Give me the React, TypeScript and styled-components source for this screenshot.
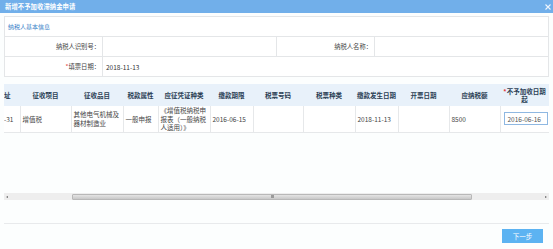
import React from 'react'
import styled, { createGlobalStyle } from 'styled-components'

const GlobalStyle = createGlobalStyle`
  html, body {
    margin: 0;
    padding: 0;
    background: #fcfefe;
  }
  body {
    font-family: "Noto Sans CJK SC", "Noto Sans", sans-serif;
    color: #333;
  }
`

const Window = styled.div`
  width: 553px;
  height: 249px;
  display: flex;
  flex-direction: column;
  background: #fcfefe;
  overflow: hidden;
`

const TitleBar = styled.div`
  height: 13px;
  flex: none;
  background: #71afea;
  display: flex;
  align-items: center;
  justify-content: space-between;
  padding: 0 2px 0 5px;
  color: #fff;
  font-size: 6.3px;
  font-weight: bold;
  letter-spacing: 0.1px;
`

const Body = styled.div`
  flex: 1;
  display: flex;
  flex-direction: column;
  padding: 3px 4px 0 4px;
`

const Panel = styled.div`
  border: 1px solid #e4e6e8;
  background: #fff;
`

const SectionTitle = styled.div`
  height: 19px;
  display: flex;
  align-items: center;
  padding-left: 3px;
  font-size: 6px;
  color: #3a82c8;
  border-bottom: 1px solid #e4e6e8;
`

const InfoRow = styled.div<{ $last?: boolean }>`
  display: grid;
  grid-template-columns: 98px 174px 98px 1fr;
  height: 19px;
  border-bottom: ${p => (p.$last ? 'none' : '1px solid #e4e6e8')};
`

const Label = styled.div`
  display: flex;
  align-items: center;
  justify-content: flex-end;
  padding-right: 2px;
  font-size: 6.3px;
  color: #444;
  border-right: 1px solid #e4e6e8;
`

const Value = styled.div<{ $span?: boolean; $edge?: boolean }>`
  display: flex;
  align-items: center;
  padding-left: 3px;
  font-size: 6.5px;
  color: #333;
  grid-column: ${p => (p.$span ? '2 / 5' : 'auto')};
  border-right: ${p => (p.$edge ? '1px solid #e4e6e8' : 'none')};
`

const Req = styled.span`
  color: #e23b3b;
`

const TableWrap = styled.div`
  margin-top: 7px;
  height: 109px;
`

const Table = styled.table`
  width: 545px;
  table-layout: fixed;
  border-collapse: collapse;
  font-size: 6.5px;
`

const Th = styled.th`
  height: 22px;
  padding: 0 2px;
  background: #e8f1fa;
  color: #2b3f55;
  font-weight: bold;
  text-align: center;
  line-height: 8.5px;
  overflow: hidden;
  white-space: nowrap;
`

const ThWrap = styled(Th)`
  white-space: normal;
`

const Td = styled.td`
  height: 24px;
  padding: 0 2px;
  border-right: 1px solid #e6e8ea;
  border-bottom: 1px solid #e6e8ea;
  color: #444;
  line-height: 8.5px;
  vertical-align: middle;
  white-space: nowrap;
  overflow: hidden;
  background: #fff;
`

const TdLast = styled(Td)`
  border-right: none;
  padding: 0 0 0 3px;
`

const DateInput = styled.div`
  width: 44px;
  height: 13px;
  box-sizing: border-box;
  border: 1px solid #8fb8e2;
  display: flex;
  align-items: center;
  padding-left: 3px;
  color: #555;
  font-size: 6.5px;
  background: #fff;
`

const Scrollbar = styled.div`
  height: 7px;
  background: #eeeeee;
  display: flex;
  align-items: center;
`

const Arrow = styled.div<{ $dir: 'l' | 'r' }>`
  width: 0;
  height: 0;
  border-top: 1.5px solid transparent;
  border-bottom: 1.5px solid transparent;
  ${p =>
    p.$dir === 'l'
      ? 'border-right: 2px solid #666; margin: 0 0 0 2px;'
      : 'border-left: 2px solid #666; margin: 0 2px 0 0;'}
`

const Thumb = styled.div`
  height: 6px;
  width: 400px;
  margin-left: 64px;
  box-sizing: border-box;
  border: 1px solid #b8b8b8;
  border-radius: 1px;
  background: linear-gradient(#e4e4e4, #c8c8c8);
  display: flex;
  align-items: center;
  justify-content: center;
`

const Grip = styled.div`
  width: 3px;
  height: 3px;
  background: #9a9a9a;
`

const Fill = styled.div`
  flex: 1;
`

const Footer = styled.div`
  height: 20px;
  flex: none;
  margin: 0 4px;
  border-top: 1px solid #e8eaec;
  display: flex;
  justify-content: flex-end;
  align-items: flex-start;
  padding: 5px 6px 0 0;
`

const NextButton = styled.button`
  width: 41px;
  height: 14px;
  border: none;
  background: #5cb3f2;
  color: #fff;
  font-family: inherit;
  font-size: 6.5px;
  padding: 0;
  cursor: pointer;
`

const cols = [16, 51, 52, 35, 52, 43, 50, 52, 43, 51, 51, 49]

const App: React.FC = () => {
  return (
    <>
      <GlobalStyle />
      <Window>
        <TitleBar>
          <span>新增不予加收滞纳金申请</span>
          <svg width="6" height="6" viewBox="0 0 6 6">
            <path d="M0.5 0.5 L5.5 5.5 M5.5 0.5 L0.5 5.5" stroke="#eef5fd" strokeWidth="1.1" />
          </svg>
        </TitleBar>
        <Body>
          <Panel>
            <SectionTitle>纳税人基本信息</SectionTitle>
            <InfoRow>
              <Label>纳税人识别号：</Label>
              <Value $edge />
              <Label>纳税人名称：</Label>
              <Value />
            </InfoRow>
            <InfoRow $last>
              <Label>
                <Req>*</Req>填票日期：
              </Label>
              <Value $span>2018-11-13</Value>
            </InfoRow>
          </Panel>

          <TableWrap>
            <Table>
              <colgroup>
                {cols.map((w, i) => (
                  <col key={i} style={{ width: w }} />
                ))}
              </colgroup>
              <thead>
                <tr>
                  <Th style={{ textAlign: 'left', padding: 0 }}>址</Th>
                  <Th>征收项目</Th>
                  <Th>征收品目</Th>
                  <Th>税款属性</Th>
                  <Th>应征凭证种类</Th>
                  <Th>缴款期限</Th>
                  <Th>税票号码</Th>
                  <Th>税票种类</Th>
                  <Th>缴款发生日期</Th>
                  <Th>开票日期</Th>
                  <Th>应纳税额</Th>
                  <ThWrap>
                    <Req>*</Req>不予加收日期
                    <br />起
                  </ThWrap>
                </tr>
              </thead>
              <tbody>
                <tr>
                  <Td style={{ padding: 0 }}>-31</Td>
                  <Td>增值税</Td>
                  <Td>
                    其他电气机械及
                    <br />
                    器材制造业
                  </Td>
                  <Td>一般申报</Td>
                  <Td>
                    《增值税纳税申
                    <br />
                    报表（一般纳税
                    <br />
                    人适用）》
                  </Td>
                  <Td>2016-06-15</Td>
                  <Td />
                  <Td />
                  <Td>2018-11-13</Td>
                  <Td />
                  <Td>8500</Td>
                  <TdLast>
                    <DateInput>2016-06-16</DateInput>
                  </TdLast>
                </tr>
              </tbody>
            </Table>
          </TableWrap>

          <Scrollbar>
            <Arrow $dir="l" />
            <Thumb>
              <Grip />
            </Thumb>
            <Fill />
            <Arrow $dir="r" />
          </Scrollbar>
        </Body>
        <Footer>
          <NextButton>下一步</NextButton>
        </Footer>
      </Window>
    </>
  )
}

export default App
